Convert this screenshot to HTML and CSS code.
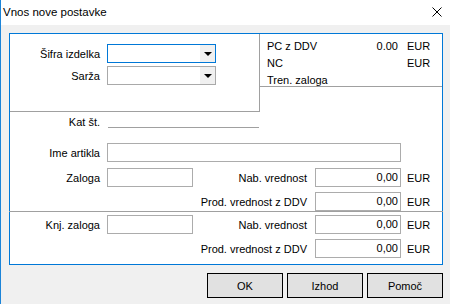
FILE: index.html
```html
<!DOCTYPE html>
<html lang="sl">
<head>
<meta charset="utf-8">
<title>Vnos nove postavke</title>
<link rel="stylesheet" href="styles.css">
</head>
<body>
<div class="window">
  <div class="titlebar">
    <span class="title">Vnos nove postavke</span>
    <svg class="close" width="10" height="10" viewBox="0 0 10 10"><path d="M0.5 0.5 L9.5 9.5 M9.5 0.5 L0.5 9.5" stroke="#000" stroke-width="1" fill="none"/></svg>
  </div>
  <div class="panel">
    <div class="upper">
      <div class="toprow">
        <div class="leftbox">
          <div class="row">
            <span class="lbl">Šifra izdelka</span>
            <div class="combo focused"><span class="dd"><span class="arrow"></span></span></div>
          </div>
          <div class="row r3">
            <span class="lbl">Sarža</span>
            <div class="combo"><span class="dd"><span class="arrow"></span></span></div>
          </div>
        </div>
        <div class="rightbox">
          <div class="inforow"><span class="ilbl">PC z DDV</span><span class="ival">0.00</span><span class="icur">EUR</span></div>
          <div class="inforow"><span class="ilbl">NC</span><span class="ival"></span><span class="icur">EUR</span></div>
          <div class="inforow"><span class="ilbl">Tren. zaloga</span></div>
        </div>
      </div>
      <div class="row katrow">
        <span class="lbl katlbl">Kat št.</span>
        <div class="katfield"></div>
      </div>
      <div class="row imerow">
        <span class="lbl">Ime artikla</span>
        <div class="input wide"></div>
      </div>
      <div class="row r6">
        <span class="lbl">Zaloga</span>
        <div class="input small"></div>
        <span class="mlbl">Nab. vrednost</span>
        <div class="input small num">0,00</div>
        <span class="cur">EUR</span>
      </div>
      <div class="row r5">
        <span class="spacer"></span>
        <span class="mlbl">Prod. vrednost z DDV</span>
        <div class="input small num">0,00</div>
        <span class="cur">EUR</span>
      </div>
    </div>
    <div class="lower">
      <div class="row">
        <span class="lbl">Knj. zaloga</span>
        <div class="input small"></div>
        <span class="mlbl">Nab. vrednost</span>
        <div class="input small num">0,00</div>
        <span class="cur">EUR</span>
      </div>
      <div class="row r5">
        <span class="spacer"></span>
        <span class="mlbl">Prod. vrednost z DDV</span>
        <div class="input small num">0,00</div>
        <span class="cur">EUR</span>
      </div>
    </div>
  </div>
  <div class="buttons">
    <button class="btn">OK</button>
    <button class="btn">Izhod</button>
    <button class="btn">Pomoč</button>
  </div>
</div>
</body>
</html>
```

FILE: styles.css
```css
* { box-sizing: border-box; }
html, body { margin: 0; padding: 0; }
body {
  background: #f0f0f0;
  font-family: "Liberation Sans", Arial, sans-serif;
  font-size: 11px;
  color: #000;
}
.window {
  width: 450px;
  height: 304px;
  border-left: 1px solid #1c84d8;
  background: #f0f0f0;
  overflow: hidden;
}
.titlebar {
  height: 25px;
  background: #fff;
  display: flex;
  align-items: center;
  justify-content: space-between;
  padding: 0 8px 0 2px;
}
.title {
  font-size: 11.5px;
  line-height: 25px;
}
.close { display: block; margin-top: -1px; }
.panel {
  margin: 8px 0 0 8px;
  width: 434px;
  height: 232px;
  border: 1px solid #0078d7;
  background: #fff;
}
.row {
  display: flex;
  align-items: center;
  height: 19px;
}
.lbl {
  width: 90px;
  text-align: right;
  margin-right: 7px;
  white-space: nowrap;
}
.toprow {
  display: flex;
  height: 78px;
  align-items: flex-start;
}
.leftbox {
  width: 250px;
  height: 78px;
  border-right: 1px solid #a0a0a0;
  border-bottom: 1px solid #a0a0a0;
  padding-top: 10px;
}
.r3 { margin-top: 3px; }
.combo {
  width: 109px;
  height: 19px;
  border: 1px solid #a9a9a9;
  background: #fff;
  display: flex;
  justify-content: flex-end;
}
.combo.focused { border-color: #0078d7; }
.dd {
  width: 15px;
  height: 17px;
  background: #f0f0f0;
  display: flex;
  align-items: center;
  justify-content: center;
}
.arrow {
  width: 0;
  height: 0;
  border-left: 4px solid transparent;
  border-right: 4px solid transparent;
  border-top: 4px solid #000;
  margin-top: 1px;
}
.rightbox {
  flex: 1;
  height: 53px;
  border-bottom: 1px solid #a0a0a0;
  padding: 4px 0 0 7px;
}
.inforow {
  display: flex;
  line-height: 17px;
  height: 17px;
}
.ilbl { width: 95px; }
.ival { width: 36px; text-align: right; }
.icur { margin-left: 9px; }
.katrow {
  margin-top: 1px;
  height: 15px;
  align-items: flex-start;
}
.katlbl {
  line-height: 15px;
  padding-top: 2px;
  margin-right: 8px;
}
.katfield {
  width: 151px;
  height: 15px;
  border-bottom: 1px solid #a0a0a0;
}
.imerow { margin-top: 15px; }
.r6 { margin-top: 6px; }
.r5 { margin-top: 5px; }
.input {
  height: 19px;
  border: 1px solid #acacac;
  background: #fff;
  line-height: 17px;
}
.wide { width: 294px; }
.small { width: 86px; }
.num { text-align: right; padding-right: 2px; }
.mlbl {
  width: 114px;
  text-align: right;
  margin-right: 8px;
  white-space: nowrap;
}
.spacer { width: 183px; }
.cur { margin-left: 6px; }
.lower {
  margin: 0 -1px;
  height: 52px;
  border-top: 1px solid #a0a0a0;
  padding: 3px 0 0 1px;
}
.buttons {
  display: flex;
  justify-content: flex-end;
  gap: 4px;
  margin-top: 8px;
  padding-right: 7px;
}
.btn {
  width: 76px;
  height: 25px;
  border: 1px solid #000;
  background: #e1e1e1;
  font-family: "Liberation Sans", Arial, sans-serif;
  font-size: 11px;
  color: #000;
  padding: 0;
  margin: 0;
}
```
